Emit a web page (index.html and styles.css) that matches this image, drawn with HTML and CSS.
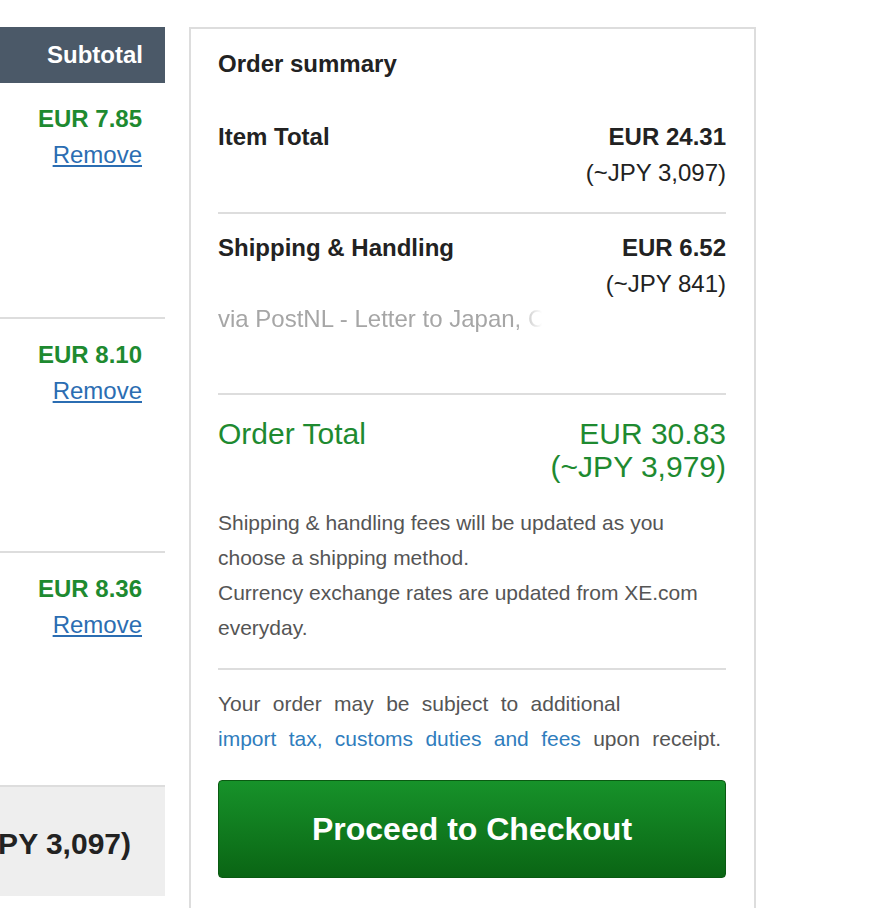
FILE: index.html
```html
<!DOCTYPE html>
<html lang="en">
<head>
    <meta charset="UTF-8">
    <meta name="viewport" content="width=device-width, initial-scale=1.0">
    <title>Cart</title>
    <link rel="stylesheet" href="styles.css">
</head>
<body>
    <div class="cart">
        <div class="items">
            <div class="items-head">Subtotal</div>

            <div class="item-row">
                <div class="price">EUR 7.85</div>
                <a href="#" class="remove">Remove</a>
            </div>
            <div class="item-row">
                <div class="price">EUR 8.10</div>
                <a href="#" class="remove">Remove</a>
            </div>
            <div class="item-row">
                <div class="price">EUR 8.36</div>
                <a href="#" class="remove">Remove</a>
            </div>

            <div class="items-foot">
                <span>Item Total: EUR 24.31 (~JPY 3,097)</span>
            </div>
        </div>

        <aside class="summary">
            <h2 class="summary-title">Order summary</h2>

            <div class="sum-section first">
                <div class="sum-row">
                    <div class="label">Item Total</div>
                    <div class="amount">
                        <div class="eur">EUR 24.31</div>
                        <div>(~JPY 3,097)</div>
                    </div>
                </div>
            </div>

            <div class="sum-section">
                <div class="sum-row">
                    <div class="label">Shipping &amp; Handling</div>
                    <div class="amount">
                        <div class="eur">EUR 6.52</div>
                        <div>(~JPY 841)</div>
                    </div>
                </div>
                <div class="via">via PostNL - Letter to Japan, Canada, USA &amp; Rest of World</div>
            </div>

            <div class="sum-section total">
                <div class="sum-row">
                    <div class="label">Order Total</div>
                    <div class="amount">
                        <div>EUR 30.83</div>
                        <div>(~JPY 3,979)</div>
                    </div>
                </div>
                <p class="note">
                    Shipping &amp; handling fees will be updated as you choose a shipping method.<br>
                    Currency exchange rates are updated from XE.com everyday.
                </p>
            </div>

            <div class="import">
                Your order may be subject to additional<br>
                <a href="#">import tax, customs duties and fees</a> upon receipt.
            </div>

            <button class="checkout">Proceed to Checkout</button>
        </aside>
    </div>
</body>
</html>
```

FILE: styles.css
```css
body {
    margin: 0;
    font-family: "Liberation Sans", Arial, sans-serif;
    color: #222;
    background: #fff;
    overflow: hidden;
}
.cart {
    display: flex;
    align-items: flex-start;
    gap: 24px;
    padding-top: 27px;
}

/* left: cart items column */
.items {
    width: 165px;
    flex-shrink: 0;
}
.items-head {
    height: 56px;
    background: #4b5968;
    color: #fff;
    font-size: 24px;
    font-weight: bold;
    display: flex;
    align-items: center;
    justify-content: flex-end;
    padding-right: 22px;
}
.item-row {
    height: 236px;
    box-sizing: border-box;
    border-bottom: 2px solid #ddd;
    padding: 18px 23px 0 0;
    text-align: right;
    font-size: 24px;
    line-height: 36px;
}
.item-row + .item-row {
    height: 234px;
}
.price {
    color: #1e8a30;
    font-weight: bold;
}
.remove {
    color: #2b6db2;
    text-decoration: underline;
}
.items-foot {
    height: 109px;
    background: #eee;
    display: flex;
    align-items: center;
    justify-content: flex-end;
    overflow: hidden;
    white-space: nowrap;
    padding: 4px 34px 0 0;
    box-sizing: border-box;
    font-size: 30px;
    font-weight: bold;
}

/* right: order summary box */
.summary {
    width: 567px;
    box-sizing: border-box;
    border: 2px solid #ddd;
    border-bottom: none;
    padding: 17px 28px 60px 27px;
}
.summary-title {
    margin: 0 0 37px;
    font-size: 24px;
    line-height: 36px;
    font-weight: bold;
}
.sum-section {
    border-bottom: 2px solid #ddd;
    padding: 16px 0 21px;
}
.sum-section.first {
    padding-top: 0;
}
.sum-row {
    display: flex;
    justify-content: space-between;
    font-size: 24px;
    line-height: 36px;
}
.sum-row .label {
    font-weight: bold;
}
.amount {
    text-align: right;
}
.eur {
    font-weight: bold;
}
.via {
    width: 340px;
    height: 70px;
    font-size: 24px;
    line-height: 34px;
    color: #a6a6a6;
    white-space: nowrap;
    overflow: hidden;
    -webkit-mask-image: linear-gradient(to right, #000 298px, transparent 324px);
    mask-image: linear-gradient(to right, #000 298px, transparent 324px);
}
.total {
    padding-top: 22px;
    padding-bottom: 23px;
}
.total .sum-row {
    font-size: 30px;
    line-height: 33px;
    color: #1e8a30;
}
.total .sum-row .label {
    font-weight: normal;
}
.note {
    margin: 22px 0 0;
    font-size: 21px;
    line-height: 35px;
    color: #555;
}
.import {
    padding-top: 16px;
    font-size: 21px;
    line-height: 35px;
    color: #555;
    word-spacing: 6.5px;
}
.import a {
    color: #2f7dbd;
    text-decoration: none;
}
.checkout {
    display: block;
    width: 100%;
    height: 98px;
    margin-top: 24px;
    border: 1px solid #0a5a12;
    border-radius: 4px;
    background: linear-gradient(#17922a, #0a6514);
    color: #fff;
    font-family: inherit;
    font-size: 32px;
    font-weight: bold;
    cursor: pointer;
}
```
